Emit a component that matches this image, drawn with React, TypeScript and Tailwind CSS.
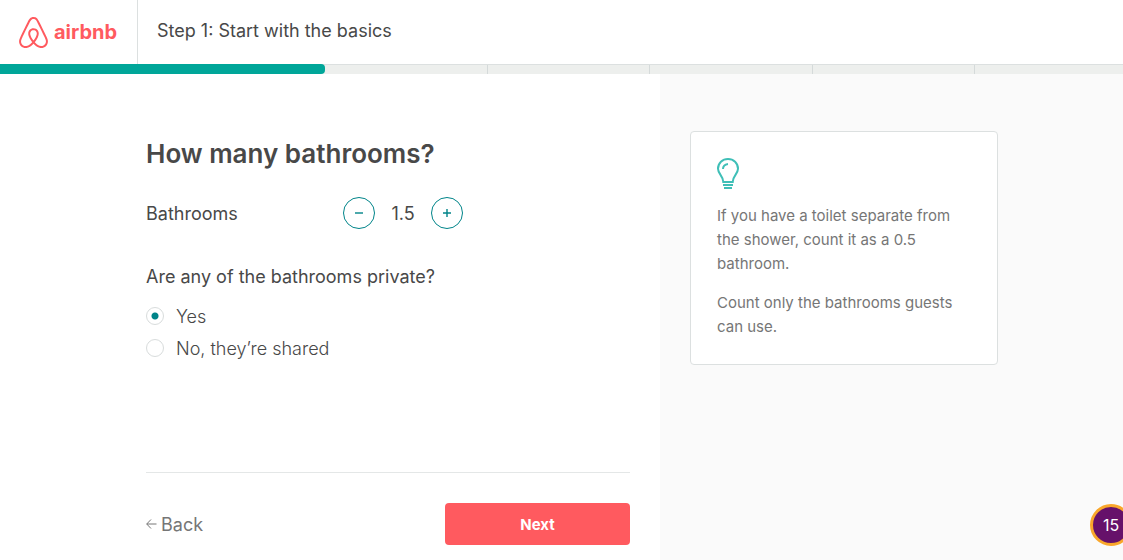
import { useState } from "react";
import { SiAirbnb } from "react-icons/si";

function StepperButton({ label, onClick, plus }: { label: string; onClick: () => void; plus?: boolean }) {
  return (
    <button
      type="button"
      aria-label={label}
      onClick={onClick}
      className="flex size-8 items-center justify-center rounded-full border border-[#008489] text-[#008489]"
    >
      <svg viewBox="0 0 10 10" className="size-[10px]" stroke="currentColor" strokeWidth="1.4" aria-hidden="true">
        <path d={plus ? "M1 5h8M5 1v8" : "M1 5h8"} />
      </svg>
    </button>
  );
}

function Choice({ label, checked, onChange }: { label: string; checked: boolean; onChange: () => void }) {
  return (
    <label className="flex h-8 items-center gap-3 text-lg font-light">
      <input
        type="radio"
        name="private"
        checked={checked}
        onChange={onChange}
        className="size-[18px] appearance-none rounded-full border border-[#d8dcdc] bg-white checked:bg-[radial-gradient(circle,#008489_3px,white_4px)]"
      />
      <span className="pt-0.5">{label}</span>
    </label>
  );
}

export default function App() {
  const [count, setCount] = useState(1.5);
  const [isPrivate, setIsPrivate] = useState(true);

  return (
    <div className="relative flex min-h-screen flex-col overflow-hidden bg-white font-['Inter','Liberation_Sans',sans-serif] text-[#484848]">
      <header className="flex h-16 items-stretch">
        <a
          href="#home"
          className="flex w-[138px] items-center gap-[5px] border-r border-[#dce0e0] pl-[18px] text-[#ff5a5f]"
        >
          <SiAirbnb className="size-[31px] shrink-0" aria-hidden="true" />
          <span className="text-xl font-bold">airbnb</span>
        </a>
        <p className="flex items-center pb-0.5 pl-[19px] text-lg">Step 1: Start with the basics</p>
      </header>

      <div
        role="progressbar"
        aria-label="Listing progress"
        aria-valuenow={25}
        className="grid h-[10px] grid-cols-[325fr_163fr_162fr_163fr_162fr_148fr] border-t border-[#dce0e0] bg-[#edefed]"
      >
        <div className="-mt-px rounded-r-[4px] bg-[#00a699]" />
        <div className="border-r border-[#d5dada]" />
        <div className="border-r border-[#d5dada]" />
        <div className="border-r border-[#d5dada]" />
        <div className="border-r border-[#d5dada]" />
        <div />
      </div>

      <div className="grid flex-1 grid-cols-[660fr_463fr]">
        <main className="flex flex-col px-[30px] pt-[60px] pb-[15px]">
          <div className="ml-auto flex w-full max-w-[484px] flex-1 flex-col">
            <h1 className="text-[26px] leading-10 font-semibold">How many bathrooms?</h1>

            <div className="mt-[23px] flex h-8 items-center text-lg">
              <span className="w-[197px] pt-0.5">Bathrooms</span>
              <StepperButton label="Remove bathroom" onClick={() => setCount(Math.max(0, count - 0.5))} />
              <output className="w-14 pt-0.5 text-center">{count}</output>
              <StepperButton label="Add bathroom" onClick={() => setCount(count + 0.5)} plus />
            </div>

            <fieldset className="mt-8">
              <legend className="mb-[7px] text-lg leading-8">Are any of the bathrooms private?</legend>
              <Choice label="Yes" checked={isPrivate} onChange={() => setIsPrivate(true)} />
              <Choice label="No, they’re shared" checked={!isPrivate} onChange={() => setIsPrivate(false)} />
            </fieldset>

            <footer className="mt-auto flex items-center justify-between border-t border-[#e4e7e7] pt-[30px]">
              <a href="#back" className="flex items-center gap-1 text-lg text-[#767676]">
                <svg viewBox="0 0 11 10" className="h-[10px] w-[11px]" fill="none" stroke="currentColor" aria-hidden="true">
                  <path d="M10.5 5H.8M5 .5.7 5 5 9.500" />
                </svg>
                <span className="pt-0.5">Back</span>
              </a>
              <button type="button" className="h-[42px] w-[185px] rounded-[4px] bg-[#ff5a5f] pt-0.5 text-[15px] font-bold text-white">
                Next
              </button>
            </footer>
          </div>
        </main>

        <aside className="bg-[#fafafa] px-[30px] pt-[57px]">
          <div className="max-w-[308px] rounded-[4px] border border-[#dce0e0] bg-white px-[26px] pt-[26px] pb-[25px] text-[15px] leading-6 text-[#767676]">
            <svg viewBox="0 0 22 32" className="h-8 w-[22px]" fill="none" stroke="#3fbfb7" strokeWidth="2" aria-hidden="true">
              <path d="M6.300 24h9.400c0-6 5.300-8 5.300-13.200C21 5 16.600 1 11 1S1 5 1 10.800C1 16 6.300 18 6.300 24z" />
              <path d="M6 27h10M7 30h8M6 11c0-2.800 2-4.600 5-5" />
            </svg>
            <p className="mt-[14px]">If you have a toilet separate from the shower, count it as a 0.5 bathroom.</p>
            <p className="mt-[15px]">Count only the bathrooms guests can use.</p>
          </div>
        </aside>
      </div>

      <button
        type="button"
        className="absolute -right-[9px] bottom-[14px] size-[42px] rounded-full border-[3px] border-[#f9a72b] bg-[#66116a] text-base text-white"
      >
        15
      </button>
    </div>
  );
}
